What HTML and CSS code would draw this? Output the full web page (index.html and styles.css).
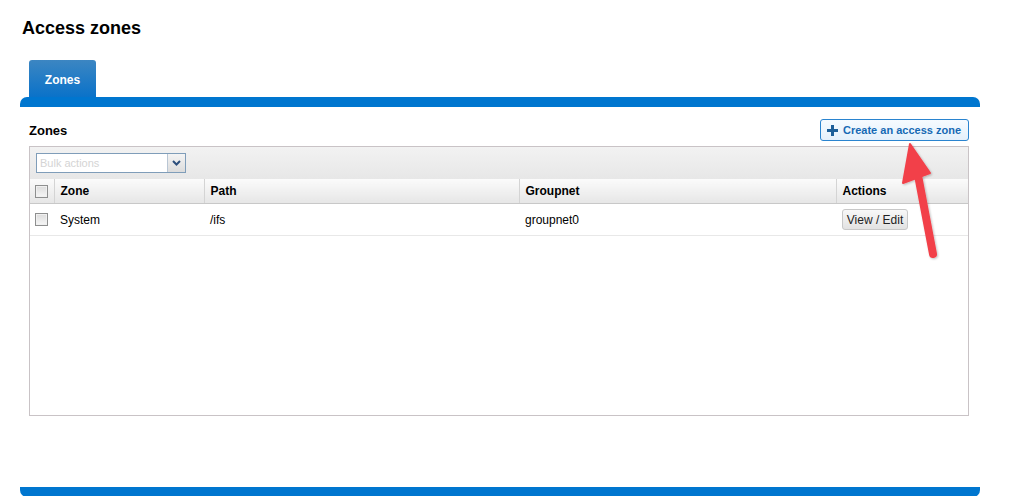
FILE: index.html
```html
<!DOCTYPE html>
<html>
<head>
<meta charset="utf-8">
<link rel="stylesheet" href="styles.css">
</head>
<body>
<div class="page">
  <h1 class="title">Access zones</h1>
  <div class="tabs">
    <div class="tab">Zones</div>
  </div>
  <div class="panel">
    <div class="panel-top"></div>
    <div class="panel-body">
      <div class="section-head">
        <h2 class="section-title">Zones</h2>
        <button class="create-btn">
          <svg class="plus" width="11" height="11" viewBox="0 0 11 11"><path d="M4 0h3v4h4v3H7v4H4V7H0V4h4z" fill="#1d5f99"/></svg>
          <span>Create an access zone</span>
        </button>
      </div>
      <div class="grid">
        <div class="toolbar">
          <div class="select">
            <span class="select-text">Bulk actions</span>
            <span class="select-btn">
              <svg width="9" height="6" viewBox="0 0 9 6"><path d="M1 1l3.5 3.5L8 1" stroke="#2d4f7c" stroke-width="2" fill="none"/></svg>
            </span>
          </div>
        </div>
        <table class="table">
          <thead>
            <tr>
              <th class="c-check"><span class="cb"></span></th>
              <th class="c-zone">Zone</th>
              <th class="c-path">Path</th>
              <th class="c-group">Groupnet</th>
              <th class="c-actions">Actions</th>
            </tr>
          </thead>
          <tbody>
            <tr>
              <td class="c-check"><span class="cb"></span></td>
              <td>System</td>
              <td>/ifs</td>
              <td>groupnet0</td>
              <td><button class="view-btn">View / Edit</button></td>
            </tr>
          </tbody>
        </table>
      </div>
    </div>
    <div class="panel-bottom"></div>
  </div>
  <svg class="arrow" width="60" height="140" viewBox="0 0 60 140">
    <defs>
      <filter id="sh" x="-50%" y="-50%" width="200%" height="200%">
        <feDropShadow dx="1" dy="1" stdDeviation="1" flood-color="#000" flood-opacity="0.25"/>
      </filter>
    </defs>
    <g filter="url(#sh)">
      <line x1="27" y1="30" x2="43" y2="114" stroke="#f2404a" stroke-width="8" stroke-linecap="round"/>
      <path d="M20 4 L40 33 L13 43 Z" fill="#f2404a" stroke="#f2404a" stroke-width="2" stroke-linejoin="round"/>
    </g>
  </svg>
</div>
</body>
</html>
```

FILE: styles.css
```css
* { box-sizing: border-box; }
html, body { margin: 0; padding: 0; background: #fff; }
body { font-family: "Liberation Sans", Arial, sans-serif; color: #000; }
.page { position: relative; width: 1016px; height: 496px; overflow: hidden; }
.title { margin: 0; padding: 18px 0 0 22px; font-size: 18px; line-height: 20px; font-weight: bold; }
.tabs { display: flex; padding: 22px 0 0 29px; }
.tab {
  width: 67px; height: 37px;
  background: linear-gradient(#3c86c2, #0a72c9);
  border-radius: 3px 3px 0 0;
  color: #fff; font-weight: bold; font-size: 12px;
  display: flex; align-items: center; justify-content: center;
  padding-top: 2px;
}
.panel { width: 960px; margin-left: 20px; display: flex; flex-direction: column; }
.panel-top { height: 10px; background: #0076cf; border-radius: 7px 7px 0 0; }
.panel-bottom { height: 10px; background: #0076cf; border-radius: 0 0 7px 7px; }
.panel-body { height: 380px; padding: 12px 11px 0 9px; }
.section-head { display: flex; align-items: center; justify-content: space-between; height: 22px; }
.section-title { margin: 0; font-size: 13px; font-weight: bold; }
.create-btn {
  height: 22px; width: 149px; padding: 0 0 0 6px;
  display: flex; align-items: center; gap: 5px;
  border: 1px solid #2a84cf; border-radius: 3px;
  background: linear-gradient(#f6fbff, #e4f0fb);
  font-family: "Liberation Sans", Arial, sans-serif;
  color: #1669b4; font-size: 11px; font-weight: bold;
  margin-right: 0;
}
.plus { display: block; }
.grid {
  margin-top: 5px; height: 270px;
  border: 1px solid #c9c3c6;
  display: flex; flex-direction: column;
}
.toolbar {
  height: 32px; padding: 6px 0 0 6px;
  background: linear-gradient(#f2f2f2, #e7e7e7);
}
.select {
  width: 150px; height: 20px; display: flex;
  border: 1px solid #7f9db9; background: #fff;
}
.select-text { flex: 1; font-size: 11px; color: #d4d4d4; padding: 3px 0 0 3px; }
.select-btn {
  width: 18px; border-left: 1px solid #b9c6d4;
  background: linear-gradient(#f4f4f4, #dcdcdc);
  display: flex; align-items: center; justify-content: center;
}
.table { border-collapse: collapse; width: 100%; table-layout: fixed; font-size: 12px; }
.table th {
  height: 24px; text-align: left; font-weight: bold;
  background: linear-gradient(#fbfbfb, #e6e6e6);
  border-bottom: 1px solid #c8c8c8; border-right: 1px solid #d4d4d4;
  padding: 1px 0 0 6px;
}
.table th:last-child { border-right: none; }
.table td { height: 32px; border-bottom: 1px solid #e8e8e8; padding: 1px 0 0 6px; }
.table .c-check { width: 24px; padding-left: 5px; }
.c-zone { width: 150px; }
.c-path { width: 315px; }
.c-group { width: 317px; }
.cb {
  display: block; width: 13px; height: 13px;
  border: 1px solid #8e8f8f;
  background: linear-gradient(#dcdcdc, #f6f6f6);
  box-shadow: inset 0 0 0 1px #f0f0f0;
}
.view-btn {
  height: 21px; width: 66px; padding: 0;
  border: 1px solid #c8c8c8; border-radius: 3px;
  background: linear-gradient(#f8f8f8, #e2e2e2);
  font-family: "Liberation Sans", Arial, sans-serif; font-size: 12px; color: #222;
}
.arrow { position: absolute; left: 890px; top: 140px; }
```
